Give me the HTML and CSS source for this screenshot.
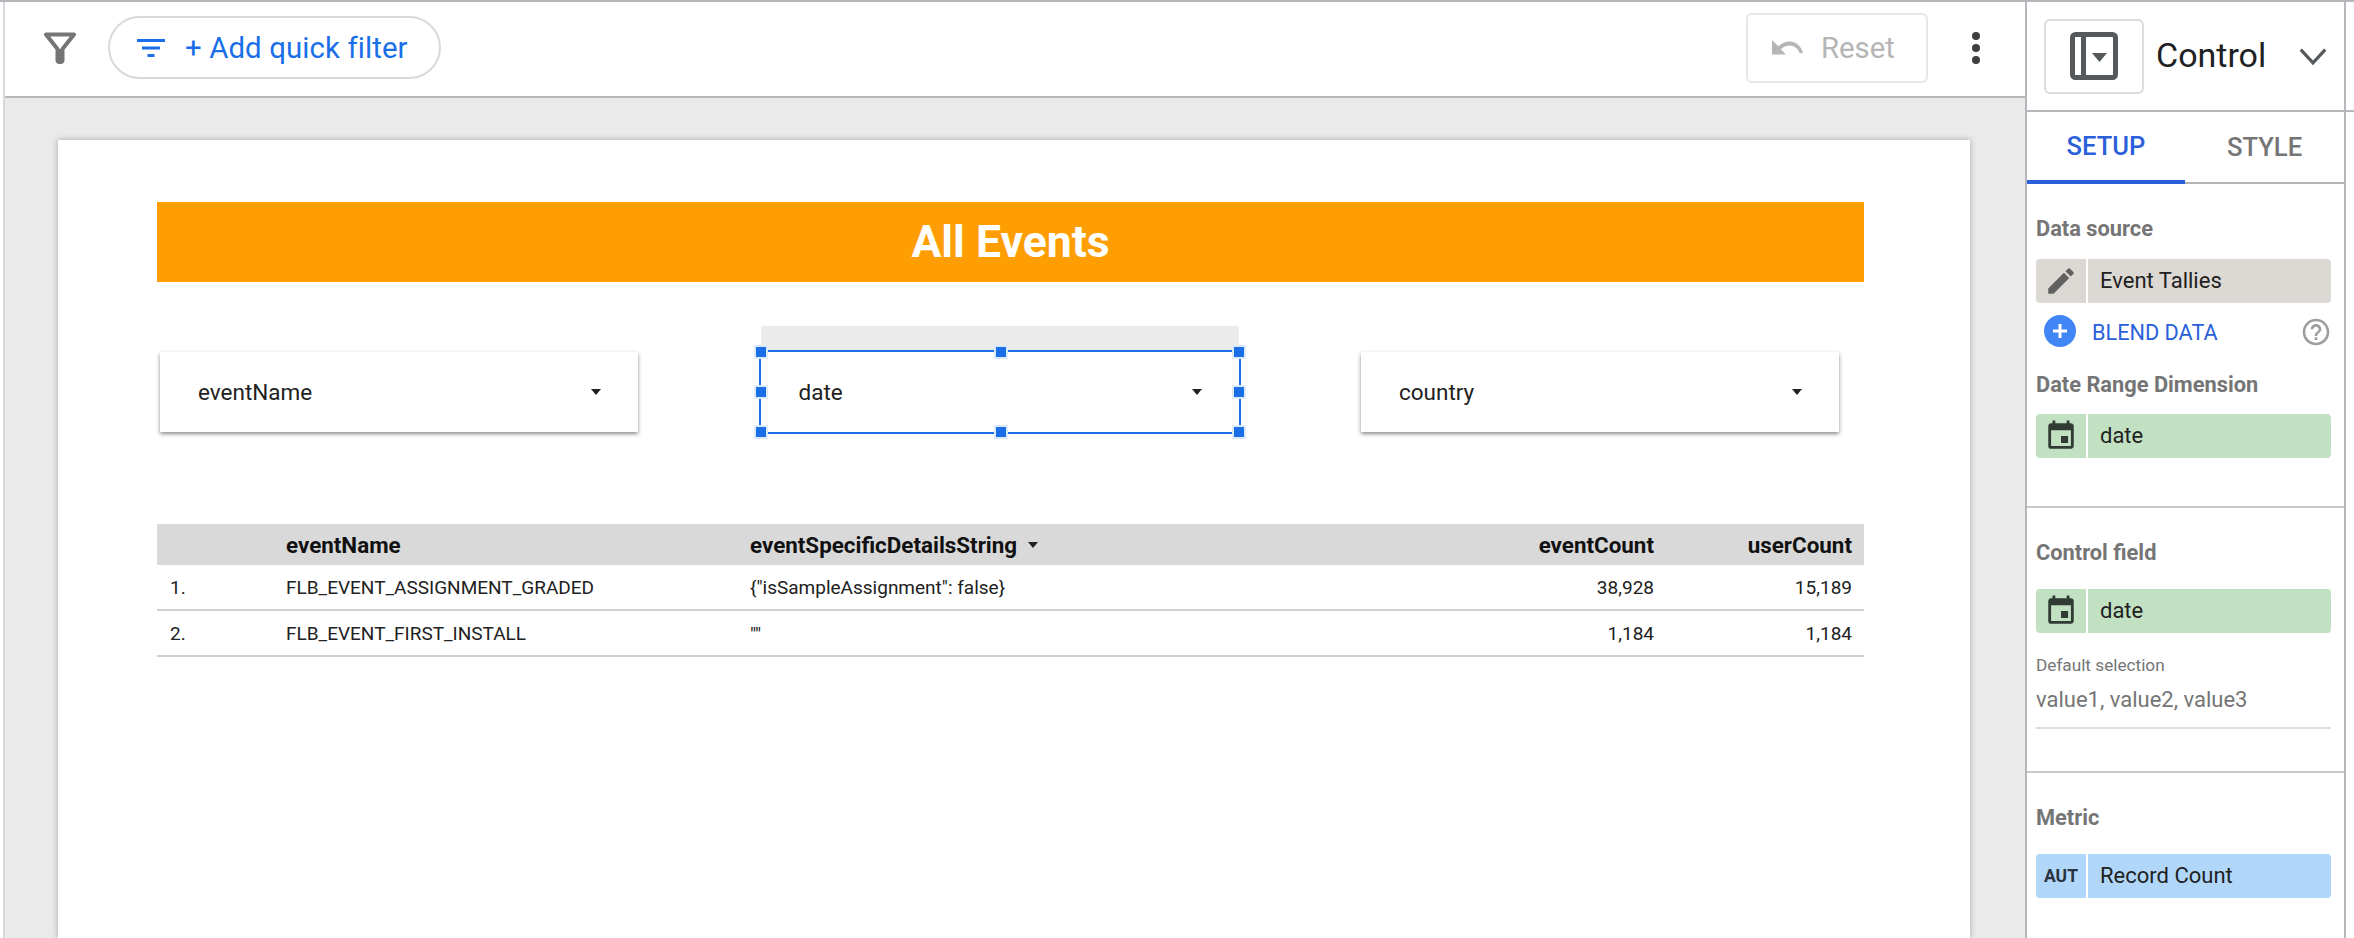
FILE: index.html
```html
<!DOCTYPE html>
<html lang="en">
  <head>
    <title>All Events</title>
    <meta charset="UTF-8" />
    <link rel="stylesheet" href="styles.css">
  </head>
  <body>
    <div class="app">

      <div class="main">
        <div class="toolbar">
          <svg class="funnel" viewBox="0 0 32 32"><path d="M2 2.500h28L18.500 17v11.500a2 2 0 0 1-2 1.500h-1a2 2 0 0 1-2-1.500V17z" fill="none" stroke="#757575" stroke-width="4" stroke-linejoin="round"/><path d="M14 17h4v12h-4z" fill="#757575"/></svg>
          <div class="quick-filter">
            <svg class="filter-lines" viewBox="0 0 28 18"><path d="M0 0h28v3H0zM5 7.500h18v3H5zM10.500 15h7v3h-7z" fill="#1a6fe8"/></svg>
            <span>+ Add quick filter</span>
          </div>
          <div class="toolbar-right">
            <div class="reset-btn">
              <svg class="undo" viewBox="0 0 31 15"><path d="M0 0v14.500h14l-5.200-5.200C11.300 7 14.300 5.500 17.500 5.500c4.700 0 8.800 3.200 10.300 8l3.200-1C29 6 23.700 1.500 17.500 1.500 13.300 1.500 9.700 3.200 6.400 6.300z" fill="#b5b5b5"/></svg>
              <span>Reset</span>
            </div>
            <div class="more-dots"><i></i><i></i><i></i></div>
          </div>
        </div>

        <div class="stage">
          <div class="page">
            <div class="banner">All Events</div>

            <div class="controls">
              <div class="dropdown raised"><span>eventName</span><b class="caret"></b></div>
              <div class="dropdown selected">
                <div class="drag-strip"></div>
                <span>date</span><b class="caret"></b>
                <i class="handle h-tl"></i><i class="handle h-tc"></i><i class="handle h-tr"></i>
                <i class="handle h-ml"></i><i class="handle h-mr"></i>
                <i class="handle h-bl"></i><i class="handle h-bc"></i><i class="handle h-br"></i>
              </div>
              <div class="dropdown raised"><span>country</span><b class="caret"></b></div>
            </div>

            <div class="table">
              <div class="tr head">
                <div></div>
                <div>eventName</div>
                <div class="sorted">eventSpecificDetailsString <b class="caret"></b></div>
                <div class="num">eventCount</div>
                <div class="num">userCount</div>
              </div>
              <div class="tr">
                <div>1.</div>
                <div>FLB_EVENT_ASSIGNMENT_GRADED</div>
                <div>{"isSampleAssignment": false}</div>
                <div class="num">38,928</div>
                <div class="num">15,189</div>
              </div>
              <div class="tr">
                <div>2.</div>
                <div>FLB_EVENT_FIRST_INSTALL</div>
                <div class="quotes">""</div>
                <div class="num">1,184</div>
                <div class="num">1,184</div>
              </div>
            </div>
          </div>
        </div>
      </div>

      <div class="panel">
        <div class="panel-head">
          <div class="type-box">
            <svg viewBox="0 0 48 48" width="48" height="48"><rect x="2.500" y="2.500" width="43" height="43" rx="3" fill="none" stroke="#55595c" stroke-width="5"/><path d="M11 2h5v44h-5z" fill="#55595c"/><path d="M22 21h15l-7.500 9z" fill="#55595c"/></svg>
          </div>
          <span class="type-name">Control</span>
          <svg class="chevron" viewBox="0 0 26 16"><path d="M1.500 1.500 13 14 24.500 1.500" fill="none" stroke="#55595c" stroke-width="3"/></svg>
        </div>

        <div class="tabs">
          <div class="tab active">SETUP</div>
          <div class="tab">STYLE</div>
        </div>

        <div class="section first">
          <div class="label source-label">Data source</div>
          <div class="pill grey">
            <div class="pill-icon">
              <svg viewBox="0 0 24 24" width="34" height="34"><path d="M3 17.250V21h3.750L17.810 9.940l-3.750-3.750L3 17.250zM20.710 7.040a1 1 0 0 0 0-1.410l-2.340-2.340a1 1 0 0 0-1.410 0l-1.830 1.830 3.750 3.750 1.830-1.830z" fill="#616161"/></svg>
            </div>
            <div class="pill-text">Event Tallies</div>
          </div>
          <div class="blend">
            <span class="plus"><svg viewBox="0 0 32 32" width="32" height="32"><circle cx="16" cy="16" r="16" fill="#4285f4"/><path d="M14.500 9h3v5.500H23v3h-5.500V23h-3v-5.500H9v-3h5.500z" fill="#fff"/></svg></span>
            <span class="blend-text">BLEND DATA</span>
            <svg class="help" viewBox="0 0 24 24" width="32" height="32"><path d="M11 18h2v-2h-2v2zm1-16C6.480 2 2 6.480 2 12s4.480 10 10 10 10-4.480 10-10S17.520 2 12 2zm0 18c-4.410 0-8-3.590-8-8s3.590-8 8-8 8 3.590 8 8-3.590 8-8 8zm0-14c-2.210 0-4 1.790-4 4h2c0-1.100.9-2 2-2s2 .9 2 2c0 2-3 1.750-3 5h2c0-2.250 3-2.500 3-5 0-2.210-1.790-4-4-4z" fill="#9e9e9e"/></svg>
          </div>
          <div class="label range-label">Date Range Dimension</div>
          <div class="pill green">
            <div class="pill-icon">
              <svg viewBox="0 0 24 24" width="34" height="34"><path d="M17 12h-5v5h5v-5zM16 1v2H8V1H6v2H5c-1.110 0-1.990.9-1.990 2L3 19a2 2 0 0 0 2 2h14c1.100 0 2-.9 2-2V5c0-1.100-.9-2-2-2h-1V1h-2zm3 18H5V8h14v11z" fill="#2f3b33"/></svg>
            </div>
            <div class="pill-text">date</div>
          </div>
        </div>

        <div class="section">
          <div class="label">Control field</div>
          <div class="pill green">
            <div class="pill-icon">
              <svg viewBox="0 0 24 24" width="34" height="34"><path d="M17 12h-5v5h5v-5zM16 1v2H8V1H6v2H5c-1.110 0-1.990.9-1.990 2L3 19a2 2 0 0 0 2 2h14c1.100 0 2-.9 2-2V5c0-1.100-.9-2-2-2h-1V1h-2zm3 18H5V8h14v11z" fill="#2f3b33"/></svg>
            </div>
            <div class="pill-text">date</div>
          </div>
          <div class="small-label">Default selection</div>
          <div class="default-input">value1, value2, value3</div>
        </div>

        <div class="section last">
          <div class="label">Metric</div>
          <div class="pill blue">
            <div class="pill-icon aut">AUT</div>
            <div class="pill-text">Record Count</div>
          </div>
        </div>
      </div>

      <div class="gutter"><div class="gutter-line"></div></div>

    </div>
  </body>
</html>
```

FILE: styles.css
```css
html, body {
  margin: 0;
  padding: 0;
  height: 100%;
  overflow: hidden;
  background-color: white;
  font-family: Roboto, "Liberation Sans", sans-serif;
  color: #212121;
}
.app {
  display: flex;
  height: 938px;
  box-sizing: border-box;
  border-top: 2px solid #b4b8bc;
}

/* left side: toolbar + report */
.main {
  width: 2022px;
  margin-left: 3px;
  display: flex;
  flex-direction: column;
  box-sizing: border-box;
  border-left: 2px solid #d8d9da;
}
.toolbar {
  height: 96px;
  flex: none;
  display: flex;
  align-items: center;
  box-sizing: border-box;
  border-bottom: 2px solid #b4b8bc;
  padding: 0 0 3px 39px;
}
.funnel {
  width: 32px;
  height: 32px;
}
.quick-filter {
  display: flex;
  align-items: center;
  width: 333px;
  height: 63px;
  margin-left: 32px;
  padding-left: 27px;
  box-sizing: border-box;
  border: 2px solid #d7d9dc;
  border-radius: 32px;
  color: #1a6fe8;
  font-size: 29.400px;
  letter-spacing: 0.1px;
}
.filter-lines {
  width: 28px;
  height: 18px;
  margin-right: 20px;
}
.toolbar-right {
  margin-left: auto;
  display: flex;
  align-items: center;
}
.reset-btn {
  display: flex;
  align-items: center;
  width: 182px;
  height: 70px;
  box-sizing: border-box;
  padding-left: 24px;
  border: 2px solid #e6e7e8;
  border-radius: 6px;
  color: #b5b5b5;
  font-size: 29.300px;
}
.undo {
  width: 31px;
  height: 15px;
  margin-right: 18px;
}
.more-dots {
  width: 96px;
  margin-right: 1px;
  display: flex;
  flex-direction: column;
  align-items: center;
  gap: 4px;
}
.more-dots i {
  width: 8px;
  height: 8px;
  border-radius: 50%;
  background: #3c4043;
}

.stage {
  flex: 1;
  background: #eaeaea;
  padding: 42px 55px 0 53px;
  overflow: hidden;
}
.page {
  height: 798px;
  box-sizing: border-box;
  background: white;
  box-shadow: 0 0 6px rgba(0, 0, 0, 0.3);
  padding: 62px 106px 0 99px;
}
.banner {
  height: 80px;
  line-height: 80px;
  background: #ff9e02;
  color: white;
  text-align: center;
  font-size: 44.500px;
  font-weight: 700;
}

.controls {
  display: flex;
  justify-content: space-between;
  margin: 70px 25px 0 3px;
}
.dropdown {
  position: relative;
  width: 478px;
  height: 80px;
  box-sizing: border-box;
  padding: 0 37px 0 38px;
  display: flex;
  align-items: center;
  justify-content: space-between;
  font-size: 22.500px;
  background: white;
}
.raised {
  box-shadow: 0 2px 4px rgba(0, 0, 0, 0.45);
}
.caret {
  flex: none;
  width: 0;
  height: 0;
  border-left: 5.500px solid transparent;
  border-right: 5.500px solid transparent;
  border-top: 6px solid #212121;
}
.selected {
  outline: 2px solid #1a6fe8;
}
.drag-strip {
  position: absolute;
  left: 0;
  right: 0;
  top: -26px;
  height: 24px;
  background: #ebebeb;
}
.handle {
  position: absolute;
  width: 10px;
  height: 10px;
  background: #1a6fe8;
  box-shadow: 0 0 0 2px #dce9fb;
}
.h-tl, .h-tc, .h-tr { top: -5px; }
.h-bl, .h-bc, .h-br { bottom: -5px; }
.h-ml, .h-mr { top: 35px; }
.h-tl, .h-ml, .h-bl { left: -5px; }
.h-tr, .h-mr, .h-br { right: -5px; }
.h-tc, .h-bc { left: 235px; }

.table {
  margin-top: 92px;
  font-size: 19px;
}
.tr {
  display: grid;
  grid-template-columns: 129px 464px 1fr 190px 198px;
  height: 46px;
  align-items: center;
  box-sizing: border-box;
  border-bottom: 2px solid #d0d0d0;
  padding: 0 12px 0 0;
}
.tr > div:first-child {
  padding-left: 13px;
}
.head {
  height: 41px;
  background: #d9d9d9;
  border-bottom: none;
  font-size: 22.400px;
  font-weight: 700;
  color: #111;
}
.sorted {
  display: flex;
  align-items: center;
  gap: 11px;
}
.num {
  text-align: right;
}
.quotes {
  align-self: start;
  padding-top: 12px;
}

/* right side: properties */
.panel {
  width: 321px;
  flex: none;
  box-sizing: border-box;
  border-left: 2px solid #b4b8bc;
  border-right: 2px solid #b4b8bc;
}
.panel-head {
  height: 110px;
  box-sizing: border-box;
  border-bottom: 2px solid #b4b8bc;
  display: flex;
  align-items: center;
  padding: 0 17px;
}
.type-box {
  width: 100px;
  height: 75px;
  flex: none;
  box-sizing: border-box;
  border: 2px solid #dadce0;
  border-radius: 6px;
  display: flex;
  align-items: center;
  justify-content: center;
}
.type-name {
  margin: 0 0 2px 12px;
  font-size: 34px;
  color: #202124;
}
.chevron {
  width: 28px;
  height: 17px;
  margin-left: auto;
}
.tabs {
  display: flex;
  height: 72px;
  box-sizing: border-box;
  border-bottom: 2px solid #b4b4b4;
}
.tab {
  flex: 1;
  display: flex;
  align-items: center;
  justify-content: center;
  font-size: 25.600px;
  font-weight: 500;
  color: #757575;
}
.active {
  flex: none;
  width: 158px;
  color: #2b5fd9;
  height: 72px;
  box-sizing: border-box;
  border-bottom: 4px solid #2b5fd9;
}
.section {
  padding: 33px 13px 0 9px;
  box-sizing: border-box;
  border-top: 2px solid #c9c9c9;
  height: 265px;
}
.first {
  border-top: none;
  height: 322px;
}
.last {
  height: 167px;
}
.label {
  font-size: 21.800px;
  font-weight: 700;
  color: #757575;
  line-height: 24px;
  margin-bottom: 24px;
}
.source-label {
  margin-bottom: 18px;
}
.range-label {
  margin-top: 14px;
  margin-bottom: 17px;
}
.pill {
  display: flex;
  height: 44px;
  border-radius: 4px;
  overflow: hidden;
  font-size: 22px;
  gap: 2px;
}
.pill-icon {
  width: 50px;
  flex: none;
  display: flex;
  align-items: center;
  justify-content: center;
}
.pill-text {
  flex: 1;
  padding-left: 12px;
  line-height: 43px;
}
.grey > div { background: #dcd8d4; }
.green > div { background: #c2e1c2; }
.blue > div { background: #b0d7fa; }
.aut {
  font-size: 17.500px;
  font-weight: 700;
  color: #2b3340;
}
.blend {
  display: flex;
  align-items: center;
  height: 56px;
  font-size: 21.700px;
  color: #2b5fd9;
}
.plus {
  display: flex;
  margin-left: 8px;
}
.blend-text {
  margin: 2px 0 0 16px;
}
.help {
  margin: 2px -1px 0 auto;
}
.small-label {
  margin-top: 22px;
  font-size: 17.200px;
  line-height: 20px;
  color: #757575;
}
.default-input {
  margin-top: 12px;
  padding-bottom: 14px;
  border-bottom: 2px solid #ddd;
  font-size: 22px;
  line-height: 26px;
  color: #757575;
}

/* strip right of the panel */
.gutter {
  flex: 1;
}
.gutter-line {
  height: 110px;
  box-sizing: border-box;
  border-bottom: 2px solid #b4b8bc;
}
```
